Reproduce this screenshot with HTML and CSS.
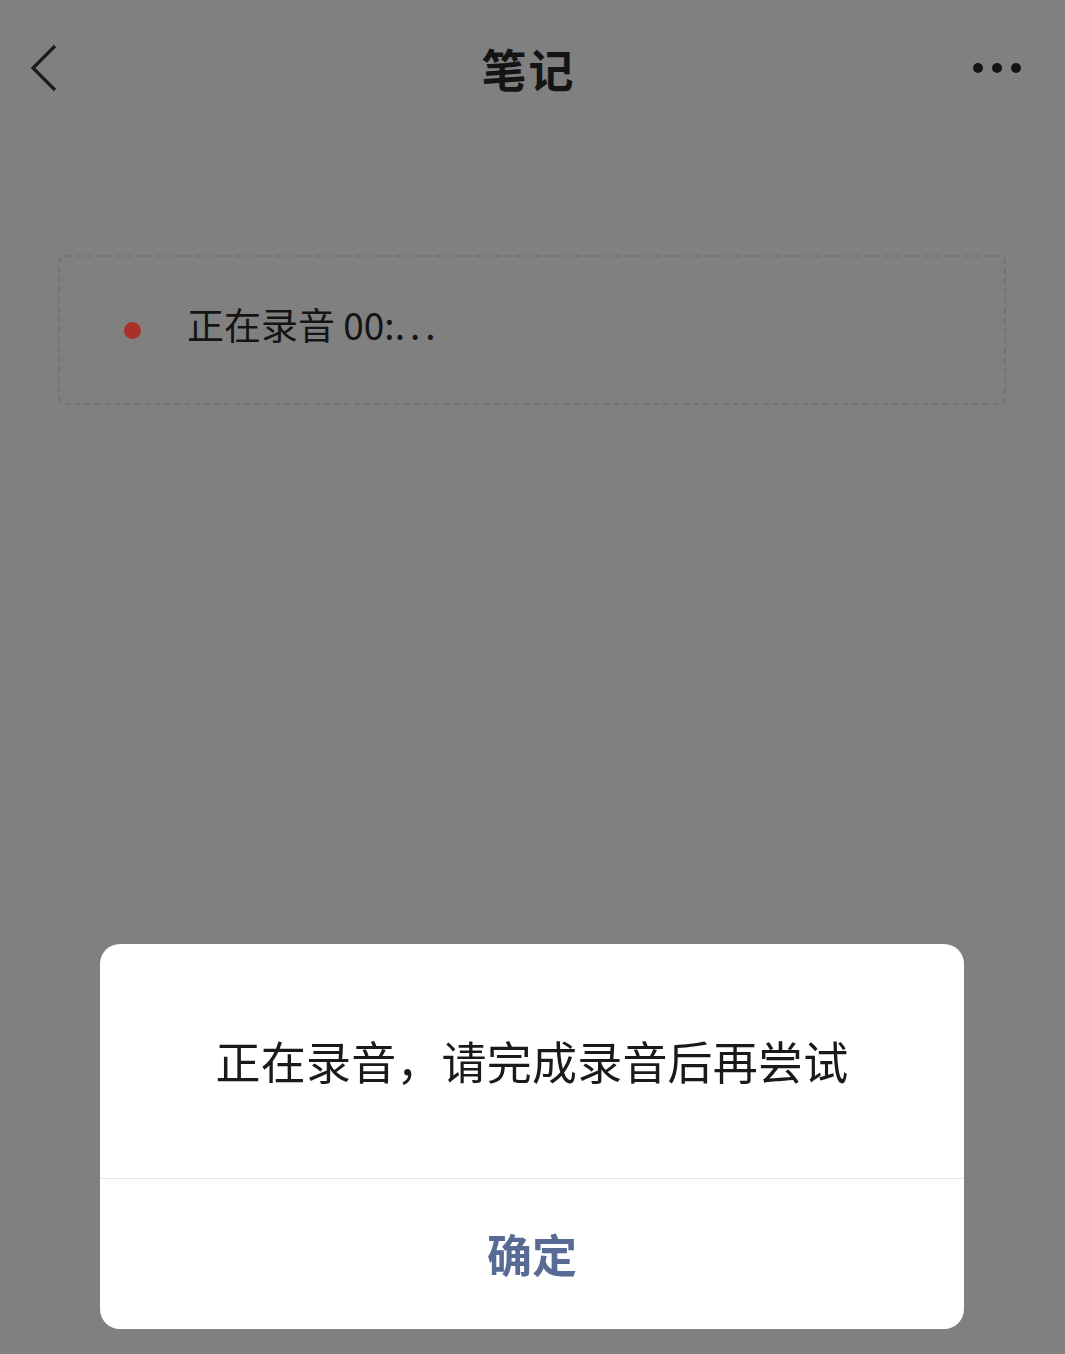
FILE: index.html
```html
<!DOCTYPE html>
<html lang="zh-CN">
<head>
    <meta charset="utf-8">
    <title>笔记</title>
    <link rel="stylesheet" href="styles.css">
</head>
<body>
    <div class="page">
        <div class="nav">
            <div class="nav-back">
                <svg width="30" height="48" viewBox="0 0 30 48">
                    <path d="M25 2 L3 24 L25 46" fill="none" stroke="#1a1a1a" stroke-width="3.2"/>
                </svg>
            </div>
            <div class="nav-title">笔记</div>
            <div class="nav-more">
                <span class="dot"></span><span class="dot"></span><span class="dot"></span>
            </div>
        </div>

        <div class="record-box">
            <span class="record-dot"></span>
            <span class="record-text">正在录音 00:<span class="ellipsis">...</span></span>
        </div>
    </div>

    <div class="mask">
        <div class="dialog">
            <div class="dialog-body">正在录音，请完成录音后再尝试</div>
            <div class="dialog-btn">确定</div>
        </div>
    </div>
</body>
</html>
```

FILE: styles.css
```css
* {
    box-sizing: border-box;
}

html,
body {
    margin: 0;
    padding: 0;
}

body {
    width: 100vw;
    min-height: 100vh;
    background: #808080;
    font-family: "Noto Sans CJK SC", "Noto Sans", sans-serif;
    color: #111;
}

.nav {
    height: 136px;
    display: flex;
    align-items: center;
    justify-content: space-between;
    padding: 0 44px 0 30px;
}

.nav-back {
    width: 60px;
    display: flex;
    align-items: center;
}

.nav-back svg {
    display: block;
}

.nav-title {
    font-size: 45px;
    font-weight: 700;
    color: #141414;
    letter-spacing: 2px;
    margin-left: 6px;
}

.nav-more {
    width: 60px;
    display: flex;
    justify-content: flex-end;
    gap: 9px;
}

.nav-more .dot {
    width: 10px;
    height: 10px;
    border-radius: 50%;
    background: #141414;
}

.record-box {
    margin: 119px 59px 0 58px;
    height: 150px;
    border: 2px dashed #747474;
    border-radius: 8px;
    display: flex;
    align-items: center;
    padding-left: 64px;
}

.record-dot {
    width: 17px;
    height: 17px;
    border-radius: 50%;
    background: #a8312a;
    margin-right: 46px;
}

.record-text {
    font-size: 37px;
    color: #141414;
    position: relative;
    top: -6px;
}

.record-text .ellipsis {
    letter-spacing: 5px;
}

.mask {
    position: fixed;
    inset: 0;
    display: flex;
    flex-direction: column;
    justify-content: flex-end;
    padding: 0 101px 25px 100px;
}

.dialog {
    background: #fff;
    border-radius: 20px;
    overflow: hidden;
}

.dialog-body {
    height: 235px;
    display: flex;
    align-items: center;
    justify-content: center;
    font-size: 45px;
    letter-spacing: 0.2px;
    color: #1a1a1a;
    border-bottom: 1px solid #e6e6e6;
    padding-bottom: 2px;
}

.dialog-btn {
    height: 150px;
    display: flex;
    align-items: center;
    justify-content: center;
    font-size: 45px;
    font-weight: 700;
    color: #576b95;
    padding-bottom: 2px;
}
```
